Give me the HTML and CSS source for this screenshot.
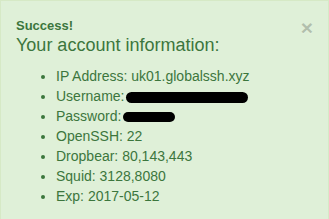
FILE: index.html
```html
<!DOCTYPE html>
<html>
<head>
<meta charset="utf-8">
<link rel="stylesheet" href="styles.css">
</head>
<body>
<div class="alert">
  <span class="close">&times;</span>
  <strong class="title">Success!</strong>
  <h4 class="heading">Your account information:</h4>
  <ul class="info">
    <li>IP Address: uk01.globalssh.xyz</li>
    <li>Username:<span class="redact redact-user"></span></li>
    <li>Password: <span class="redact redact-pass"></span></li>
    <li>OpenSSH: 22</li>
    <li>Dropbear: 80,143,443</li>
    <li>Squid: 3128,8080</li>
    <li>Exp: 2017-05-12</li>
  </ul>
</div>
</body>
</html>
```
FILE: styles.css
```css
html, body {
  margin: 0;
  padding: 0;
  overflow: hidden;
  background: #ffffff;
}
body {
  width: 329px;
  height: 219px;
  font-family: "Liberation Sans", Arial, sans-serif;
  font-size: 14px;
  line-height: 20px;
  color: #3c763d;
}
.alert {
  position: relative;
  box-sizing: border-box;
  width: 329px;
  height: 219px;
  padding: 15px 35px 0 15px;
  background: #dff0d8;
  border: 1px solid #d6e9c6;
  border-bottom: 0;
}
.title {
  display: block;
  font-size: 13px;
  font-weight: bold;
  line-height: 20px;
}
.heading {
  margin: 0 0 10px;
  font-size: 18px;
  font-weight: normal;
  line-height: 19.8px;
}
.info {
  margin: 0;
  padding-left: 40px;
}
.info li {
  line-height: 20px;
}
.redact {
  display: inline-block;
  background: #000;
  border-radius: 6px;
  vertical-align: top;
}
.redact-user {
  width: 122px;
  height: 11px;
  margin-top: 6px;
  margin-left: 2px;
}
.redact-pass {
  width: 52px;
  height: 10px;
  margin-top: 6px;
  margin-left: -2px;
}
.close {
  position: absolute;
  top: 16px;
  right: 15px;
  font-size: 21px;
  font-weight: bold;
  line-height: 21px;
  color: #000;
  opacity: 0.2;
  text-shadow: 0 1px 0 #fff;
}
```
